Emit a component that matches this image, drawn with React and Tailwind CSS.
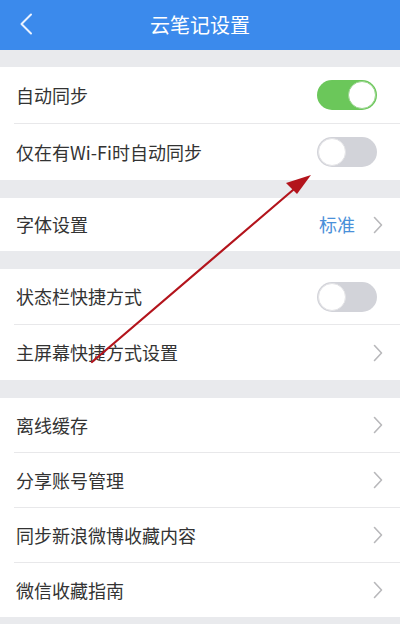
import React from 'react'

const font = { fontFamily: '"Noto Sans CJK SC", "Noto Sans", sans-serif' }

function Toggle({ on }) {
    return (
        <div
            className={`mr-[6px] flex h-[30px] w-[60px] items-center rounded-full p-[1px] ${
                on ? 'justify-end bg-[#6bc75a]' : 'justify-start bg-[#d2d3d9]'
            }`}
        >
            <div
                className={`h-[28px] w-[28px] rounded-full bg-white border ${
                    on ? 'border-[#9ad58e]' : 'border-[#e3e3e6]'
                }`}
            />
        </div>
    )
}

function Chevron() {
    return (
        <svg width="10" height="18" viewBox="0 0 10 18" fill="none">
            <path d="M1.5 1.5 L8.5 9 L1.5 16.5" stroke="#b8b8bb" strokeWidth="1.6" strokeLinecap="round" strokeLinejoin="round" />
        </svg>
    )
}

function Row({ label, right, h = 'h-[55px]' }) {
    return (
        <div className={`flex ${h} items-center justify-between pl-[16px] pr-[17px]`}>
            <span className="text-[18px] text-[#333333]">{label}</span>
            <div className="flex items-center gap-[18px]">{right}</div>
        </div>
    )
}

function Divider() {
    return <div className="ml-[14px] h-px bg-[#e8e8ea]" />
}

export default function App() {
    return (
        <div className="relative h-[624px] w-[400px] overflow-hidden bg-[#e9eaed]" style={font}>
            <div className="relative flex h-[50px] items-center justify-center bg-[#3b8aec]">
                <svg className="absolute left-[18px] top-[13px]" width="16" height="22" viewBox="0 0 16 22" fill="none">
                    <path d="M13 1.5 L3.5 11 L13 20.5" stroke="#eaf2ff" strokeWidth="2" strokeLinecap="round" strokeLinejoin="round" />
                </svg>
                <span className="text-[20px] text-white">云笔记设置</span>
            </div>

            <div className="mt-[17px] bg-white">
                <Row h="h-[56px]" label="自动同步" right={<Toggle on />} />
                <Divider />
                <Row h="h-[56px]" label="仅在有Wi-Fi时自动同步" right={<Toggle />} />
            </div>

            <div className="mt-[18px] bg-white">
                <Row
                    h="h-[53px]"
                    label="字体设置"
                    right={
                        <>
                            <span className="text-[18px] text-[#4a90d9]">标准</span>
                            <Chevron />
                        </>
                    }
                />
            </div>

            <div className="mt-[18px] bg-white">
                <Row label="状态栏快捷方式" right={<Toggle />} />
                <Divider />
                <Row label="主屏幕快捷方式设置" right={<Chevron />} />
            </div>

            <div className="mt-[18px] bg-white">
                <Row h="h-[54px]" label="离线缓存" right={<Chevron />} />
                <Divider />
                <Row h="h-[54px]" label="分享账号管理" right={<Chevron />} />
                <Divider />
                <Row h="h-[54px]" label="同步新浪微博收藏内容" right={<Chevron />} />
                <Divider />
                <Row h="h-[54px]" label="微信收藏指南" right={<Chevron />} />
            </div>

            {/* red annotation arrow */}
            <svg className="pointer-events-none absolute left-0 top-0" width="400" height="624" viewBox="0 0 400 624">
                <line x1="92" y1="362" x2="300" y2="184" stroke="#b3141c" strokeWidth="2.2" strokeLinecap="round" />
                <polygon points="311,175 286,183 297,194" fill="#b3141c" />
            </svg>
        </div>
    )
}
